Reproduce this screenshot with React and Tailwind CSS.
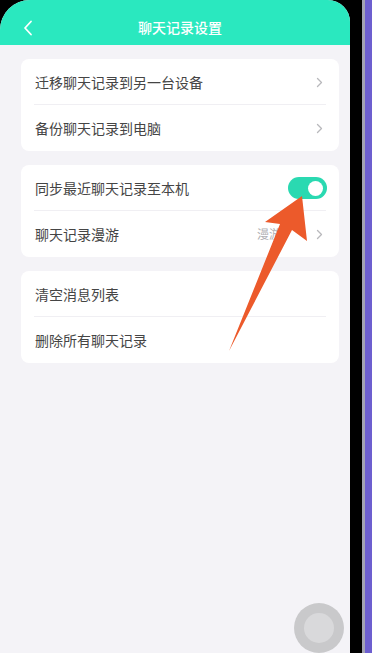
import React from "react";

const font = { fontFamily: '"Noto Sans CJK SC", "Noto Sans", sans-serif' };

const Chevron = () => (
  <svg width="7" height="11" viewBox="0 0 7 11" fill="none">
    <path d="M1.5 1.5 L5.5 5.5 L1.5 9.5" stroke="#b8b8bc" strokeWidth="1.3" strokeLinecap="round" strokeLinejoin="round" />
  </svg>
);

const Row = ({ label, right, divider }) => (
  <div className="relative flex h-[46px] items-center justify-between pl-[14px] pr-[16px]">
    <span className="text-[14px] text-[#454545]">{label}</span>
    {right}
    {divider && <div className="absolute bottom-0 left-[13px] right-[13px] h-px bg-[#f0eff3]" />}
  </div>
);

const Card = ({ children }) => (
  <div className="mx-[11px] rounded-[8px] bg-white">{children}</div>
);

export default function App() {
  return (
    <div className="flex h-[653px] w-[372px] overflow-hidden bg-black" style={font}>
      {/* phone screen */}
      <div className="relative flex h-full w-[350px] flex-col overflow-hidden rounded-tl-[30px] rounded-tr-[22px] bg-[#f4f3f7] pl-[10px]">
        <header className="-ml-[10px] flex h-[45px] bg-[#2ae8bf] pl-[10px]">
          <div className="relative flex h-full w-full items-center justify-center pt-[10px]">
            <svg className="absolute left-[13px] top-[20px]" width="10" height="16" viewBox="0 0 10 16" fill="none">
              <path d="M8 1.5 L2 8 L8 14.5" stroke="#ffffff" strokeWidth="1.8" strokeLinecap="round" strokeLinejoin="round" />
            </svg>
            <h1 className="text-[14px] font-medium text-white">聊天记录设置</h1>
          </div>
        </header>

        <div className="flex flex-col gap-[14px] pt-[14px]">
          <Card>
            <Row label="迁移聊天记录到另一台设备" right={<Chevron />} divider />
            <Row label="备份聊天记录到电脑" right={<Chevron />} />
          </Card>
          <Card>
            <Row
              label="同步最近聊天记录至本机"
              divider
              right={
                <div className="-mr-[4px] flex h-[22px] w-[39px] items-center justify-end rounded-full bg-[#2ad9b1] pr-[4px]">
                  <div className="h-[15px] w-[15px] rounded-full bg-white" />
                </div>
              }
            />
            <Row
              label="聊天记录漫游"
              right={
                <div className="flex items-center">
                  <span className="mr-[35px] text-[12px] text-[#b0b0b4]">漫游</span>
                  <Chevron />
                </div>
              }
            />
          </Card>
          <Card>
            <Row label="清空消息列表" divider />
            <Row label="删除所有聊天记录" />
          </Card>
        </div>

        {/* annotation arrow */}
        <svg className="pointer-events-none absolute left-0 top-0" width="350" height="653" viewBox="0 0 350 653">
          <path d="M302 196 L307 241 L292 230 L229 351 L280 224 L265 222 Z" fill="#ec5a2b" />
        </svg>

        {/* floating ball */}
        <div className="absolute left-[294px] top-[603px] flex h-[50px] w-[50px] items-center justify-center rounded-full bg-[#c9c9cb]">
          <div className="h-[30px] w-[30px] rounded-full bg-[#d9d9db]" />
        </div>
      </div>
      {/* bezel */}
      <div className="w-[12px] bg-black" />
      <div className="w-[3px] bg-[#a3a3b3]" />
      <div className="flex-1 bg-[#6d5fcf]" />
    </div>
  );
}
